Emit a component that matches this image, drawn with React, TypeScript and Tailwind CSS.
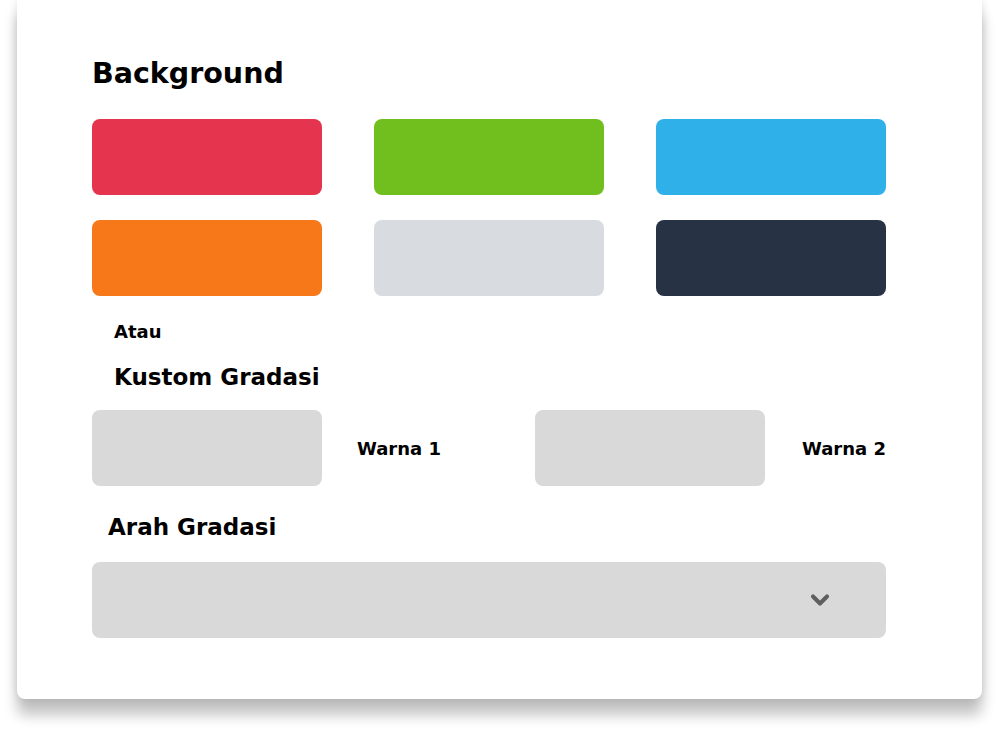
import { ChevronDown } from 'lucide-react';

const swatches = ['#e5344e', '#70bf1f', '#30b0e8', '#f77818', '#d8dbe0', '#273245'];

export default function App() {
  return (
    <div className="min-h-screen bg-white font-['DejaVu_Sans',sans-serif] text-black">
      <div className="ml-[17px] w-[965px] h-[699px] rounded-b-lg bg-white shadow-[0_16px_14px_rgba(0,0,0,0.24),0_0_10px_rgba(0,0,0,0.12)] pl-[75px] pr-[96px] pt-[55px]">
        <h1 className="text-[28.5px] leading-[38px] font-bold">Background</h1>

        <div className="mt-[26px] grid grid-cols-3 gap-x-[52px] gap-y-[25px]">
          {swatches.map((c) => (
            <div key={c} className="h-[76px] rounded-lg" style={{ backgroundColor: c }} />
          ))}
        </div>

        <p className="mt-[24px] ml-[22px] text-[18px] leading-[24px] font-bold">Atau</p>
        <h2 className="mt-[18px] ml-[22px] text-[23px] leading-[30px] font-bold">Kustom Gradasi</h2>

        <div className="mt-[18px] flex items-center">
          <div className="w-[443px] flex items-center">
            <div className="w-[230px] h-[76px] rounded-lg bg-[#d9d9d9]" />
            <span className="ml-[35px] text-[18px] font-bold">Warna 1</span>
          </div>
          <div className="flex-1 flex items-center justify-between">
            <div className="w-[230px] h-[76px] rounded-lg bg-[#d9d9d9]" />
            <span className="text-[18px] font-bold">Warna 2</span>
          </div>
        </div>

        <h2 className="mt-[26px] ml-[16px] text-[23px] leading-[30px] font-bold">Arah Gradasi</h2>

        <div className="mt-[20px] h-[76px] rounded-lg bg-[#d9d9d9] flex items-center justify-end pr-[52px]">
          <ChevronDown className="w-[28px] h-[28px] text-[#5f5f5f]" strokeWidth={3.5} />
        </div>
      </div>
    </div>
  );
}
